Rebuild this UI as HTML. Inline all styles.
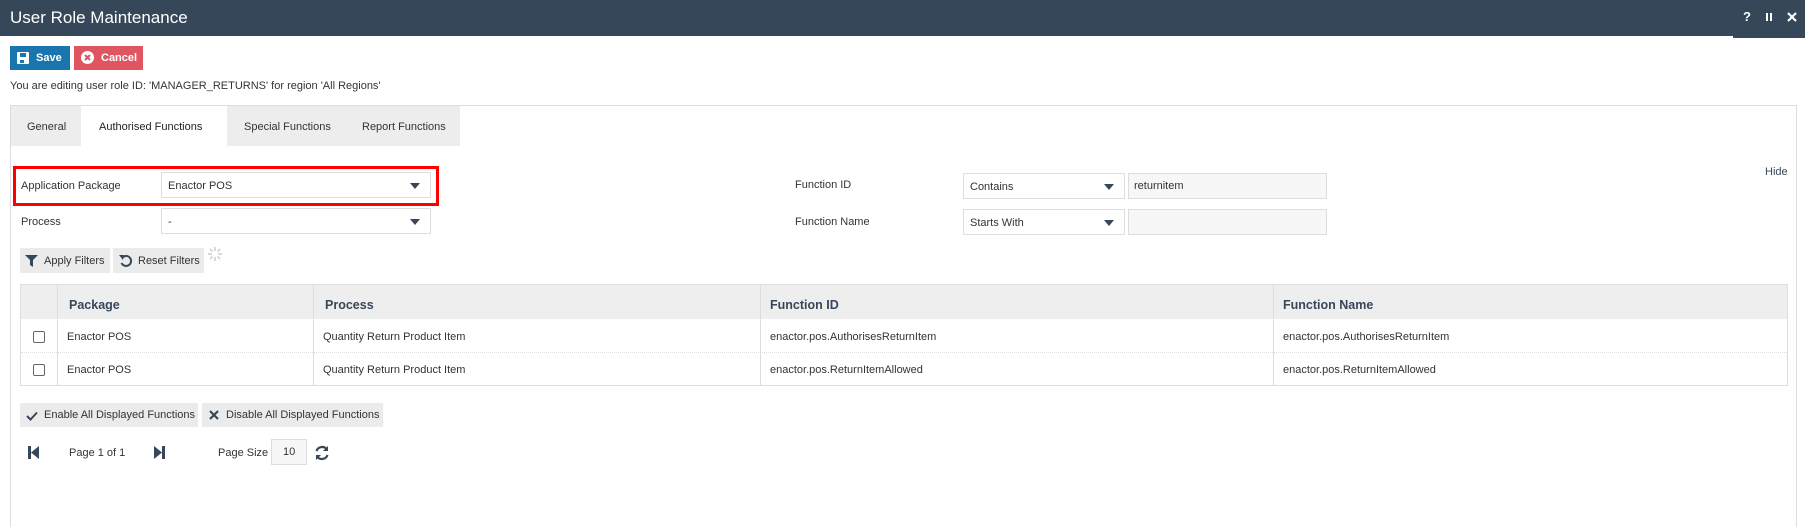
<!DOCTYPE html>
<html><head><meta charset="utf-8"><style>
*{box-sizing:border-box;margin:0;padding:0}
html,body{width:1805px;height:527px;overflow:hidden}
body{background:#fff;font-family:"Liberation Sans",Arial,sans-serif;color:#333;font-size:11px;position:relative}
.a{position:absolute;white-space:nowrap}
.hdr{left:0;top:0;width:1805px;height:36px;background:#37475a}
.hdr2{left:1733px;top:0;width:72px;height:38px;background:#37475a}
.title{left:10px;top:8px;color:#fff;font-size:17px}
.btn{height:24px;color:#fff;font-weight:bold;font-size:11px;line-height:25px}
.gbtn{background:#ebebeb;height:25px;line-height:26px;font-size:11px;color:#333}
.sel{border:1px solid #ddd;background:#fff;height:26px;line-height:26px;padding-left:6px;font-size:11px}
.tri{position:absolute;right:10px;top:10px;width:0;height:0;border-left:5px solid transparent;border-right:5px solid transparent;border-top:6px solid #37475a}
.inp{border:1px solid #ddd;background:#f7f7f7;height:26px;line-height:24px;padding-left:5px}
.th{font-size:12.5px;color:#37475a;font-weight:bold;top:298px}
.td{font-size:11px;color:#333}
.cb{width:12px;height:12px;border:1px solid #666;border-radius:2px;background:#fff}
.tab{font-size:11px;top:121px}
</style></head><body>
<div class="a hdr"></div><div class="a hdr2"></div>
<div class="a title">User Role Maintenance</div>
<div class="a" style="left:1743px;top:9px;color:#fff;font-weight:bold;font-size:13px">?</div>
<div class="a" style="left:1766px;top:13px;width:2px;height:8px;background:#fff"></div>
<div class="a" style="left:1770px;top:13px;width:2px;height:8px;background:#fff"></div>
<svg class="a" style="left:1787px;top:12px" width="10" height="10"><path d="M1 1L9 9M9 1L1 9" stroke="#fff" stroke-width="2.2"/></svg>

<div class="a btn" style="left:10px;top:46px;width:60px;background:#1a74ae">
<svg class="a" style="left:7px;top:6px" width="12" height="12"><rect x="0" y="0" width="12" height="12" rx="1" fill="#fff"/><rect x="3" y="1" width="6" height="4" fill="#1a74ae"/><rect x="3" y="8" width="4" height="3" fill="#1a74ae"/></svg>
<span class="a" style="left:26px;top:0">Save</span></div>
<div class="a btn" style="left:74px;top:46px;width:69px;background:#e05562">
<svg class="a" style="left:7px;top:5px" width="13" height="13"><circle cx="6.5" cy="6.5" r="6.5" fill="#fff"/><path d="M4 4L9 9M9 4L4 9" stroke="#e05562" stroke-width="2"/></svg>
<span class="a" style="left:27px;top:0">Cancel</span></div>
<div class="a" style="left:10px;top:80px;color:#333">You are editing user role ID: 'MANAGER_RETURNS' for region 'All Regions'</div>

<div class="a" style="left:10px;top:105px;width:1787px;height:430px;border:1px solid #ddd"></div>
<div class="a" style="left:11px;top:106px;width:449px;height:40px;background:#ededed"></div>
<div class="a" style="left:81px;top:106px;width:146px;height:41px;background:#fff"></div>
<div class="a tab" style="left:27px">General</div>
<div class="a tab" style="left:99px;color:#222">Authorised Functions</div>
<div class="a tab" style="left:244px">Special Functions</div>
<div class="a tab" style="left:362px">Report Functions</div>
<div class="a" style="left:1765px;top:166px;color:#37475a">Hide</div>

<div class="a" style="left:13px;top:166px;width:426px;height:40px;border:3px solid #f00"></div>
<div class="a" style="left:21px;top:180px">Application Package</div>
<div class="a sel" style="left:161px;top:172px;width:270px">Enactor POS<div class="tri"></div></div>
<div class="a" style="left:21px;top:216px">Process</div>
<div class="a sel" style="left:161px;top:208px;width:270px">-<div class="tri"></div></div>

<div class="a" style="left:795px;top:179px">Function ID</div>
<div class="a sel" style="left:963px;top:173px;width:162px">Contains<div class="tri"></div></div>
<div class="a inp" style="left:1128px;top:173px;width:199px">returnitem</div>
<div class="a" style="left:795px;top:216px">Function Name</div>
<div class="a sel" style="left:963px;top:209px;width:162px">Starts With<div class="tri"></div></div>
<div class="a inp" style="left:1128px;top:209px;width:199px"></div>

<div class="a gbtn" style="left:20px;top:248px;width:90px">
<svg class="a" style="left:5px;top:7px" width="13" height="12"><path d="M0 0H13L8 5V12L5 10V5Z" fill="#37475a"/></svg>
<span class="a" style="left:24px;top:0">Apply Filters</span></div>
<div class="a gbtn" style="left:113px;top:248px;width:91px">
<svg class="a" style="left:6px;top:6px" width="13" height="13"><path d="M3 4A5 5 0 1 1 2.5 9" fill="none" stroke="#37475a" stroke-width="2"/><path d="M0 1L5 1L4 6Z" fill="#37475a"/></svg>
<span class="a" style="left:25px;top:0">Reset Filters</span></div>
<svg class="a" style="left:208px;top:247px" width="14" height="14"><g stroke="#ccc" stroke-width="1.5"><path d="M7 0V4M7 10V14M0 7H4M10 7H14M2 2L4.5 4.5M9.5 9.5L12 12M12 2L9.5 4.5M2 12L4.5 9.5"/></g></svg>

<div class="a" style="left:20px;top:284px;width:1768px;height:102px;border:1px solid #ddd"></div>
<div class="a" style="left:21px;top:285px;width:1766px;height:34px;background:#eee"></div>
<div class="a" style="left:21px;top:352px;width:1766px;border-top:1px dotted #ddd"></div>
<div class="a" style="left:57px;top:285px;width:1px;height:100px;background:#ddd"></div>
<div class="a" style="left:313px;top:285px;width:1px;height:100px;background:#ddd"></div>
<div class="a" style="left:760px;top:285px;width:1px;height:100px;background:#ddd"></div>
<div class="a" style="left:1273px;top:285px;width:1px;height:100px;background:#ddd"></div>
<div class="a th" style="left:69px">Package</div>
<div class="a th" style="left:325px">Process</div>
<div class="a th" style="left:770px">Function ID</div>
<div class="a th" style="left:1283px">Function Name</div>
<div class="a cb" style="left:33px;top:331px"></div>
<div class="a cb" style="left:33px;top:364px"></div>
<div class="a td" style="left:67px;top:331px">Enactor POS</div>
<div class="a td" style="left:323px;top:331px">Quantity Return Product Item</div>
<div class="a td" style="left:770px;top:331px">enactor.pos.AuthorisesReturnItem</div>
<div class="a td" style="left:1283px;top:331px">enactor.pos.AuthorisesReturnItem</div>
<div class="a td" style="left:67px;top:364px">Enactor POS</div>
<div class="a td" style="left:323px;top:364px">Quantity Return Product Item</div>
<div class="a td" style="left:770px;top:364px">enactor.pos.ReturnItemAllowed</div>
<div class="a td" style="left:1283px;top:364px">enactor.pos.ReturnItemAllowed</div>

<div class="a gbtn" style="left:20px;top:403px;width:178px;height:24px;line-height:25px">
<svg class="a" style="left:6px;top:8px" width="12" height="10"><path d="M1 5L4.5 8.5L11 1.5" fill="none" stroke="#37475a" stroke-width="2"/></svg>
<span class="a" style="left:24px;top:0">Enable All Displayed Functions</span></div>
<div class="a gbtn" style="left:202px;top:403px;width:181px;height:24px;line-height:25px">
<svg class="a" style="left:7px;top:7px" width="10" height="10"><path d="M1 1L9 9M9 1L1 9" stroke="#37475a" stroke-width="2.2"/></svg>
<span class="a" style="left:24px;top:0">Disable All Displayed Functions</span></div>

<svg class="a" style="left:28px;top:446px" width="11" height="13"><rect x="0" y="0" width="3" height="13" fill="#37475a"/><path d="M11 0V13L3 6.5Z" fill="#37475a"/></svg>
<div class="a" style="left:69px;top:447px">Page 1 of 1</div>
<svg class="a" style="left:154px;top:446px" width="11" height="13"><path d="M0 0V13L8 6.5Z" fill="#37475a"/><rect x="8" y="0" width="3" height="13" fill="#37475a"/></svg>
<div class="a" style="left:218px;top:447px">Page Size</div>
<div class="a inp" style="left:271px;top:439px;width:36px;padding-left:11px;line-height:25px">10</div>
<svg class="a" style="left:314px;top:445px" width="16" height="16"><path d="M2.5 6A6 6 0 0 1 13 4.5M13.5 10A6 6 0 0 1 3 11.5" fill="none" stroke="#37475a" stroke-width="2.2"/><path d="M14 1V6H9Z M2 15V10H7Z" fill="#37475a"/></svg>
</body></html>
